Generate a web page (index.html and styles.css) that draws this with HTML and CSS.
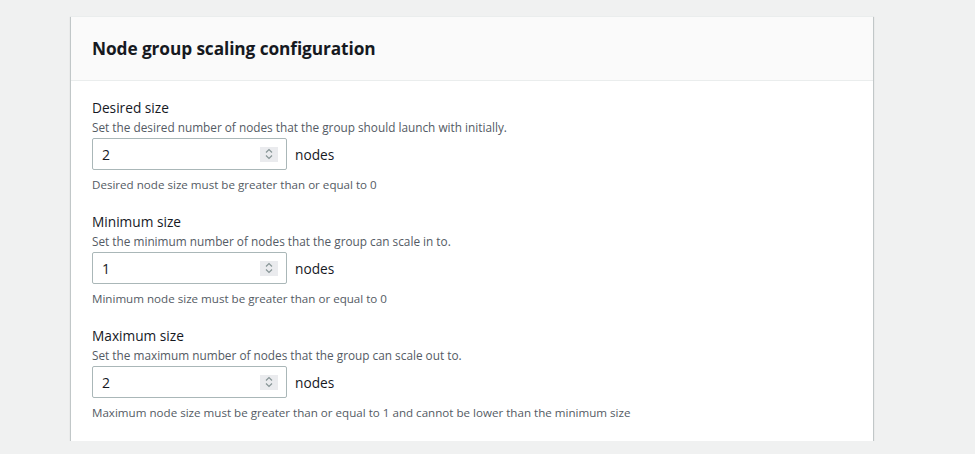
FILE: index.html
```html
<!DOCTYPE html>
<html>
<head>
<meta charset="utf-8">
<link rel="stylesheet" href="styles.css">
</head>
<body>
<div class="card">
  <div class="card-header"><h2>Node group scaling configuration</h2></div>
  <div class="card-body">
    <div class="field">
      <div class="label">Desired size</div>
      <div class="desc">Set the desired number of nodes that the group should launch with initially.</div>
      <div class="control">
        <div class="input"><span class="val">2</span><span class="spin"><svg width="10" height="12" viewBox="0 0 10 12"><path d="M2 4.5L5 1.5L8 4.5M2 7.5L5 10.5L8 7.5" fill="none" stroke="#879596" stroke-width="1.2"/></svg></span></div>
        <span class="unit">nodes</span>
      </div>
      <div class="hint">Desired node size must be greater than or equal to 0</div>
    </div>
    <div class="field">
      <div class="label">Minimum size</div>
      <div class="desc">Set the minimum number of nodes that the group can scale in to.</div>
      <div class="control">
        <div class="input"><span class="val">1</span><span class="spin"><svg width="10" height="12" viewBox="0 0 10 12"><path d="M2 4.5L5 1.5L8 4.5M2 7.5L5 10.5L8 7.5" fill="none" stroke="#879596" stroke-width="1.2"/></svg></span></div>
        <span class="unit">nodes</span>
      </div>
      <div class="hint">Minimum node size must be greater than or equal to 0</div>
    </div>
    <div class="field">
      <div class="label">Maximum size</div>
      <div class="desc">Set the maximum number of nodes that the group can scale out to.</div>
      <div class="control">
        <div class="input"><span class="val">2</span><span class="spin"><svg width="10" height="12" viewBox="0 0 10 12"><path d="M2 4.5L5 1.5L8 4.5M2 7.5L5 10.5L8 7.5" fill="none" stroke="#879596" stroke-width="1.2"/></svg></span></div>
        <span class="unit">nodes</span>
      </div>
      <div class="hint">Maximum node size must be greater than or equal to 1 and cannot be lower than the minimum size</div>
    </div>
  </div>
</div>
</body>
</html>
```

FILE: styles.css
```css
html, body {
  margin: 0;
  padding: 0;
  background: #f0f1f1;
  font-family: "Open Sans", "Noto Sans", sans-serif;
  color: #16191f;
}
body {
  padding: 16px 0 0 71px;
}
.card {
  width: 802px;
  background: #fff;
  border-top: 1px solid #eaeded;
  box-shadow: 0 1px 1px 0 rgba(0,28,36,.3), 1px 1px 1px 0 rgba(0,28,36,.15), -1px 1px 1px 0 rgba(0,28,36,.15);
}
.card-header {
  background: #fafafa;
  border-bottom: 1px solid #eaeded;
  height: 63px;
  display: flex;
  align-items: center;
  padding: 0 21px;
}
.card-header h2 {
  margin: 0;
  font-size: 17.3px;
  font-weight: 700;
  letter-spacing: -0.1px;
}
.card-body {
  padding: 17px 21px 20px;
  display: flex;
  flex-direction: column;
  gap: 19px;
}
.field {
  display: flex;
  flex-direction: column;
}
.label {
  font-size: 13.7px;
  line-height: 20px;
}
.desc {
  font-size: 11.8px;
  line-height: 18px;
  color: #545b64;
  font-weight: 500;
}
.control {
  display: flex;
  align-items: center;
  gap: 8px;
  margin-top: 2px;
}
.input {
  height: 30px;
  border: 1px solid #aab7b8;
  border-radius: 2px;
  display: flex;
  align-items: center;
  justify-content: space-between;
  padding: 0 8px 0 9px;
  box-sizing: content-box;
  width: 176px;
}
.val {
  font-size: 14px;
}
.spin {
  width: 18px;
  height: 15px;
  background: #eaebee;
  display: flex;
  align-items: center;
  justify-content: center;
}
.unit {
  font-size: 13.7px;
}
.hint {
  font-size: 11.6px;
  line-height: 16px;
  color: #545b64;
  font-weight: 500;
  margin-top: 7px;
}
```
